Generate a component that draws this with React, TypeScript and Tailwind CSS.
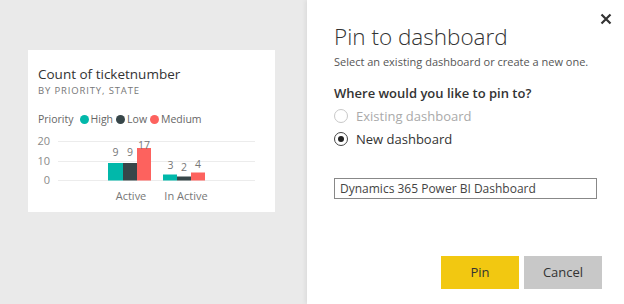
const font = { fontFamily: '"Open Sans", "Noto Sans", sans-serif' };

function Chart() {
  return (
    <svg width="247" height="76" viewBox="0 0 247 76" className="block">
      <g transform="translate(0,4)">
        <g fontFamily='"Open Sans", sans-serif' fontSize="11" fill="#8a8a8a">
          <text x="22" y="9" textAnchor="end">20</text>
          <text x="22" y="29" textAnchor="end">10</text>
          <text x="22" y="48" textAnchor="end">0</text>
        </g>
        <g stroke="#ececec" strokeWidth="1">
          <line x1="30" y1="5.5" x2="227" y2="5.5" />
          <line x1="30" y1="25.5" x2="227" y2="25.5" />
          <line x1="30" y1="44.5" x2="227" y2="44.5" />
        </g>
        <rect x="80" y="27" width="15" height="17.5" fill="#01b8aa" />
        <rect x="95" y="27" width="14" height="17.5" fill="#374649" />
        <rect x="109" y="12" width="14" height="32.5" fill="#fd625e" />
        <rect x="135" y="38.5" width="14" height="6" fill="#01b8aa" />
        <rect x="149" y="40.5" width="14" height="4" fill="#374649" />
        <rect x="163" y="36.5" width="14" height="8" fill="#fd625e" />
        <g fontFamily='"Open Sans", sans-serif' fontSize="10.5" fill="#777" textAnchor="middle">
          <text x="87.5" y="20">9</text>
          <text x="102" y="20">9</text>
          <text x="116" y="13">17</text>
          <text x="142.5" y="33">3</text>
          <text x="156" y="35">2</text>
          <text x="170" y="32">4</text>
        </g>
        <g fontFamily='"Open Sans", sans-serif' fontSize="11" fill="#777" textAnchor="middle">
          <text x="103" y="64">Active</text>
          <text x="158" y="64">In Active</text>
        </g>
      </g>
    </svg>
  );
}

function Dot({ color }: { color: string }) {
  return <span className="inline-block w-[9px] h-[9px] rounded-full mr-[2px]" style={{ backgroundColor: color }} />;
}

export default function App() {
  return (
    <div className="w-[624px] h-[304px] flex bg-[#eaeaea] overflow-hidden" style={font}>
      <div className="w-[307px] shrink-0 pl-[28px] pt-[50px]">
        <div className="w-[247px] h-[162px] bg-white">
          <div className="pl-[10px] pt-[15px]">
            <div className="text-[13.5px] leading-[18px] text-[#333]">Count of ticketnumber</div>
            <div className="text-[9.5px] leading-[12px] tracking-[0.09em] text-[#777] mt-[2px]">BY PRIORITY, STATE</div>
            <div className="flex items-center gap-[3px] text-[10.5px] text-[#666] mt-[15px] leading-[14px]">
              <span className="mr-[3px]">Priority</span>
              <span className="flex items-center"><Dot color="#01b8aa" />High</span>
              <span className="flex items-center"><Dot color="#374649" />Low</span>
              <span className="flex items-center"><Dot color="#fd625e" />Medium</span>
            </div>
          </div>
          <div className="mt-[6px]">
            <Chart />
          </div>
        </div>
      </div>
      <div className="flex-1 bg-white shadow-[-2px_0_4px_rgba(0,0,0,0.06)] relative pl-[27px] pr-[26px]">
        <button className="absolute right-[11px] top-[12px] w-[14px] h-[14px] flex items-center justify-center">
          <svg width="12" height="12" viewBox="0 0 12 12">
            <path d="M1.5 1.5 L10.5 10.5 M10.5 1.5 L1.5 10.5" stroke="#333" strokeWidth="2.2" />
          </svg>
        </button>
        <div className="pt-[22px] text-[22.5px] leading-[29px] font-light text-[#333]">Pin to dashboard</div>
        <div className="text-[11px] leading-[14px] text-[#555] mt-[4px]">Select an existing dashboard or create a new one.</div>
        <div className="text-[13px] leading-[18px] font-semibold text-[#333] mt-[15px]">Where would you like to pin to?</div>
        <div className="flex items-center mt-[5px] text-[13px] leading-[18px] text-[#aaa]">
          <span className="w-[14px] h-[14px] rounded-full border border-[#c8c8c8] mr-[8px]" />
          Existing dashboard
        </div>
        <div className="flex items-center mt-[5px] text-[13px] leading-[18px] text-[#333]">
          <span className="w-[14px] h-[14px] rounded-full border border-[#444] mr-[8px] flex items-center justify-center">
            <span className="w-[6px] h-[6px] rounded-full bg-[#222]" />
          </span>
          New dashboard
        </div>
        <div className="mt-[30px] w-[263px] h-[21px] border border-[#888] flex items-center pl-[5px] text-[12px] text-[#444]">
          Dynamics 365 Power BI Dashboard
        </div>
        <div className="flex justify-end gap-[5px] mt-[57px] mr-[-4px]">
          <button className="w-[78px] h-[33px] bg-[#f2c811] text-[13px] text-[#333]">Pin</button>
          <button className="w-[78px] h-[33px] bg-[#c8c8c8] text-[13px] text-[#333]">Cancel</button>
        </div>
      </div>
    </div>
  );
}
